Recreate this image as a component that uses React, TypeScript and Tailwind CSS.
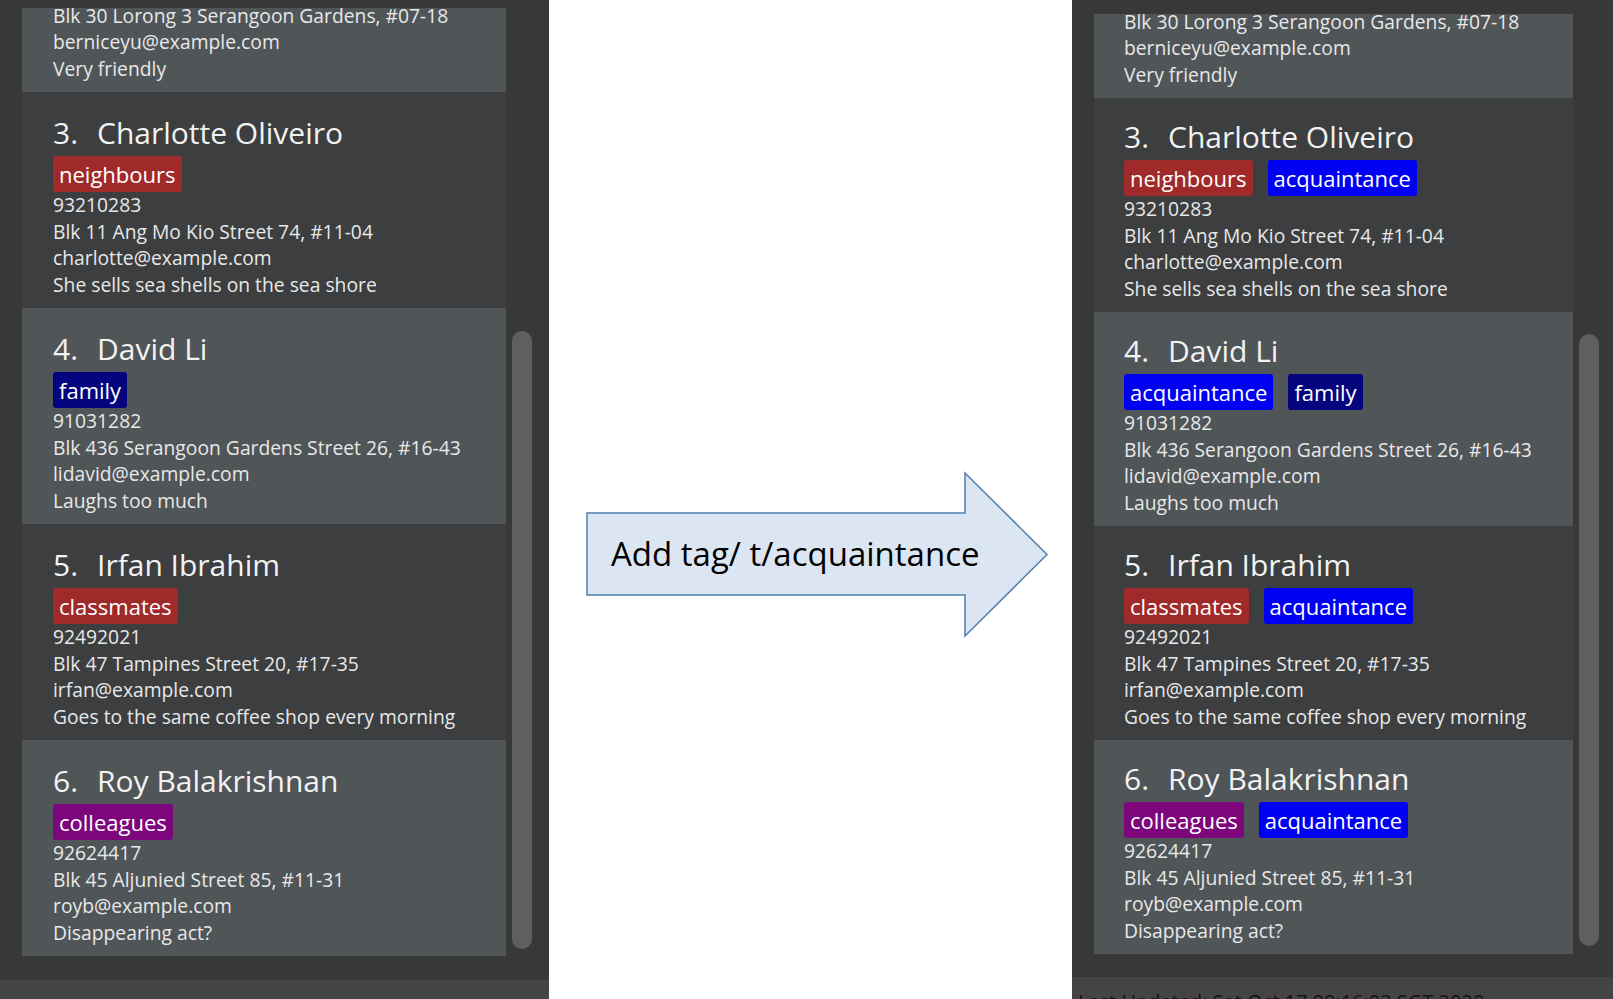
import React from 'react';

type Tag = { label: string; color: string };

interface Person {
  id: number;
  name: string;
  phone: string;
  address: string;
  email: string;
  remark: string;
  tags: Tag[];
}

const neighbours = { label: 'neighbours', color: 'bg-[#a02a2a]' };
const family = { label: 'family', color: 'bg-[#04047e]' };
const classmates = { label: 'classmates', color: 'bg-[#a02a2a]' };
const colleagues = { label: 'colleagues', color: 'bg-[#7d067d]' };
const friends = { label: 'friends', color: 'bg-[#a02a2a]' };
const acquaintance = { label: 'acquaintance', color: 'bg-[#0000f2]' };

const before: Person[] = [
  {
    id: 2,
    name: 'Bernice Yu',
    phone: '99272758',
    address: 'Blk 30 Lorong 3 Serangoon Gardens, #07-18',
    email: 'berniceyu@example.com',
    remark: 'Very friendly',
    tags: [colleagues, friends],
  },
  {
    id: 3,
    name: 'Charlotte Oliveiro',
    phone: '93210283',
    address: 'Blk 11 Ang Mo Kio Street 74, #11-04',
    email: 'charlotte@example.com',
    remark: 'She sells sea shells on the sea shore',
    tags: [neighbours],
  },
  {
    id: 4,
    name: 'David Li',
    phone: '91031282',
    address: 'Blk 436 Serangoon Gardens Street 26, #16-43',
    email: 'lidavid@example.com',
    remark: 'Laughs too much',
    tags: [family],
  },
  {
    id: 5,
    name: 'Irfan Ibrahim',
    phone: '92492021',
    address: 'Blk 47 Tampines Street 20, #17-35',
    email: 'irfan@example.com',
    remark: 'Goes to the same coffee shop every morning',
    tags: [classmates],
  },
  {
    id: 6,
    name: 'Roy Balakrishnan',
    phone: '92624417',
    address: 'Blk 45 Aljunied Street 85, #11-31',
    email: 'royb@example.com',
    remark: 'Disappearing act?',
    tags: [colleagues],
  },
];

const after: Person[] = before.map(p => {
  if (p.id === 3) return { ...p, tags: [neighbours, acquaintance] };
  if (p.id === 4) return { ...p, tags: [acquaintance, family] };
  if (p.id === 5) return { ...p, tags: [classmates, acquaintance] };
  if (p.id === 6) return { ...p, tags: [colleagues, acquaintance] };
  return p;
});

function PersonCard({
  person,
  index,
  tall,
}: {
  person: Person;
  index: number;
  tall: boolean;
}) {
  const shade = index % 2 === 0 ? 'bg-[#505558]' : 'bg-[#3c3e3f]';
  const size = tall ? 'h-[216px] pt-[21px] pl-[31px]' : 'h-[214px] pt-[19px] pl-[30px]';
  const first = index === 0 ? (tall ? '-mt-[132px]' : '-mt-[130px]') : '';

  return (
    <div className={`shrink-0 flex flex-col ${shade} ${size} ${first}`}>
      <div className="flex items-baseline text-[30px] leading-[40px] text-[#f2f2f2] whitespace-nowrap">
        <span className="w-[44px]">{person.id}.</span>
        <span>{person.name}</span>
      </div>
      <div className="flex gap-[15px] mt-[3px]">
        {person.tags.map(tag => (
          <span
            key={tag.label}
            className={`h-[36px] px-[6px] flex items-center rounded-[3px] text-[22px] text-white ${tag.color}`}
          >
            {tag.label}
          </span>
        ))}
      </div>
      <div className="text-[19.3px] leading-[26.7px] text-[#e8e8e8] whitespace-nowrap">
        <div>{person.phone}</div>
        <div>{person.address}</div>
        <div>{person.email}</div>
        <div>{person.remark}</div>
      </div>
    </div>
  );
}

function ListPanel({ people, tall }: { people: Person[]; tall: boolean }) {
  return (
    <div
      className={`flex flex-col h-full bg-[#383838] shrink-0 ${
        tall ? 'w-[549px]' : 'w-[541px]'
      }`}
    >
      <div
        className={`flex ${
          tall ? 'h-[980px] pt-[8px] pl-[22px]' : 'h-[977px] pt-[14px] pl-[22px]'
        }`}
      >
        <div
          className={`flex flex-col overflow-hidden ${
            tall ? 'w-[484px] h-[949px]' : 'w-[479px] h-[940px]'
          }`}
        >
          {people.map((p, i) => (
            <PersonCard key={p.id} person={p} index={i} tall={tall} />
          ))}
        </div>
        <div
          className={`ml-[6px] w-[20px] rounded-full bg-[#5f5f5f] ${
            tall ? 'mt-[323px] h-[618px]' : 'mt-[320px] h-[612px]'
          }`}
        />
      </div>
      <div className="flex-1 bg-[#444444] overflow-hidden pl-[6px]">
        <div
          className={`text-[20px] leading-[28px] text-[#141414] whitespace-nowrap ${
            tall ? 'mt-[15px]' : 'mt-[11px]'
          }`}
        >
          Last Updated: Sat Oct 17 09:16:03 SGT 2020
        </div>
      </div>
    </div>
  );
}

function CommandArrow() {
  return (
    <div className="relative ml-[37px] mt-[471px] w-[463px] h-[167px]">
      <svg width="463" height="167" viewBox="0 0 463 167" className="block">
        <polygon
          points="1,42 379,42 379,2 461,83.5 379,165 379,124 1,124"
          fill="#dce6f2"
          stroke="#4f7fae"
          strokeWidth="1.5"
          strokeLinejoin="miter"
        />
      </svg>
      <div className="absolute left-[25px] top-[61px] text-[33px] leading-[44px] text-black whitespace-nowrap">
        Add tag/ t/acquaintance
      </div>
    </div>
  );
}

export default function App() {
  return (
    <div
      className="flex w-[1613px] h-[999px] overflow-hidden bg-white"
      style={{ fontFamily: '"Open Sans", "Noto Sans", sans-serif' }}
    >
      <ListPanel people={before} tall={true} />
      <div className="w-[523px] shrink-0 bg-white">
        <CommandArrow />
      </div>
      <ListPanel people={after} tall={false} />
    </div>
  );
}
